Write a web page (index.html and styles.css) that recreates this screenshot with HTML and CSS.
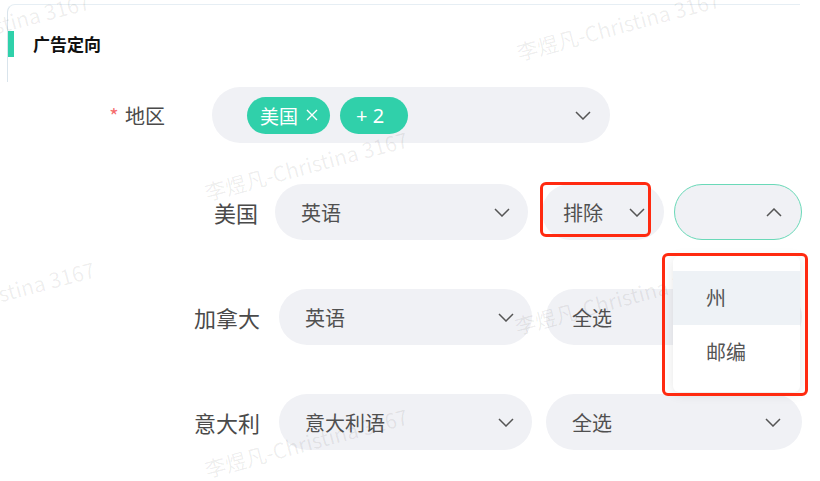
FILE: index.html
```html
<!DOCTYPE html>
<html lang="zh-CN">
<head>
<meta charset="utf-8">
<title>广告定向</title>
<link rel="stylesheet" href="styles.css">
</head>
<body>
<div class="page">
  <div class="card">
    <div class="card-head">
      <span class="bar"></span>
      <span class="title">广告定向</span>
    </div>
  </div>

  <div class="form">
    <div class="row row-main">
      <div class="label label-main"><span class="req">*</span> 地区</div>
      <div class="select select-main">
        <div class="tags">
          <span class="tag">美国<svg class="x" viewBox="0 0 14 14"><path d="M2 2L12 12M12 2L2 12"/></svg></span>
          <span class="tag tag-more">+ 2</span>
        </div>
        <svg class="chev" viewBox="0 0 16 9"><path d="M1 1L8 8L15 1"/></svg>
      </div>
    </div>

    <div class="row row-sub row-us">
      <div class="label label-us">美国</div>
      <div class="select s-lang"><span class="val">英语</span><svg class="chev" viewBox="0 0 16 9"><path d="M1 1L8 8L15 1"/></svg></div>
      <div class="select s-mode"><span class="val">排除</span><svg class="chev" viewBox="0 0 16 9"><path d="M1 1L8 8L15 1"/></svg></div>
      <div class="select s-type open"><span class="val"></span><svg class="chev" viewBox="0 0 16 9"><path d="M1 8L8 1L15 8"/></svg></div>
    </div>

    <div class="row row-sub">
      <div class="label">加拿大</div>
      <div class="select s-lang"><span class="val">英语</span><svg class="chev" viewBox="0 0 16 9"><path d="M1 1L8 8L15 1"/></svg></div>
      <div class="select s-wide"><span class="val">全选</span><svg class="chev" viewBox="0 0 16 9"><path d="M1 1L8 8L15 1"/></svg></div>
    </div>

    <div class="row row-sub">
      <div class="label">意大利</div>
      <div class="select s-lang"><span class="val">意大利语</span><svg class="chev" viewBox="0 0 16 9"><path d="M1 1L8 8L15 1"/></svg></div>
      <div class="select s-wide"><span class="val">全选</span><svg class="chev" viewBox="0 0 16 9"><path d="M1 1L8 8L15 1"/></svg></div>
    </div>
  </div>

  <div class="watermarks">
    <div class="wm wm1">李煜凡-Christina 3167</div>
    <div class="wm wm2">李煜凡-Christina 3167</div>
    <div class="wm wm3">李煜凡-Christina 3167</div>
    <div class="wm wm4">李煜凡-Christina 3167</div>
    <div class="wm wm5">李煜凡-Christina 3167</div>
    <div class="wm wm6">李煜凡-Christina 3167</div>
  </div>

  <div class="dropdown">
    <div class="opt active">州</div>
    <div class="opt">邮编</div>
  </div>

  <div class="mark mark1"></div>
  <div class="mark mark2"></div>
</div>
</body>
</html>
```
FILE: styles.css
```css
* { box-sizing: border-box; }
html, body { margin: 0; padding: 0; background: #fff; }
body {
  font-family: "Noto Sans CJK SC", "Noto Sans", sans-serif;
  color: #505050;
}
.page {
  position: relative;
  width: 820px;
  height: 481px;
  overflow: hidden;
}

.card {
  margin: 4px 0 0 7px;
  width: 793px;
  height: 78px;
  border-top: 1px solid #e6eef4;
  border-left: 1px solid #d9e4ec;
  border-top-left-radius: 8px;
  padding-top: 26px;
}
.card-head {
  display: flex;
  align-items: center;
  height: 26px;
}
.bar {
  width: 6px;
  height: 26px;
  background: #2fd1aa;
}
.title {
  margin-left: 19px;
  font-size: 17px;
  font-weight: bold;
  color: #111;
  line-height: 26px;
}

.form { display: flex; flex-direction: column; }
.row { display: flex; align-items: center; height: 56px; }
.row-main { margin-top: 5px; }
.row-us { margin-top: 41px; }
.row-sub + .row-sub { margin-top: 49px; }

.label {
  width: 260px;
  margin-right: 19px;
  text-align: right;
  font-size: 22px;
  color: #4a4a4a;
  flex: none;
}
.label-main { width: 165px; margin-right: 47px; font-size: 20px; }
.label-us { width: 258px; margin-right: 17px; }
.req { color: #f56c6c; margin-right: 2px; }

.select {
  display: flex;
  align-items: center;
  justify-content: space-between;
  height: 56px;
  border-radius: 28px;
  background: #f0f1f5;
  flex: none;
  font-size: 20px;
  color: #505050;
}
.select-main { width: 398px; padding: 0 19px 0 35px; }
.s-lang { width: 253px; padding: 0 18px 0 26px; }
.s-mode { width: 122px; margin-left: 14px; padding: 0 19px 0 21px; }
.s-type { width: 128px; margin-left: 10px; padding: 0 19px 0 21px; border: 1px solid #6ad9b8; }
.s-wide { width: 256px; margin-left: 14px; padding: 0 21px 0 26px; }

.chev {
  width: 16px;
  height: 9px;
  fill: none;
  stroke: #555;
  stroke-width: 1.5;
  flex: none;
}

.tags { display: flex; gap: 10px; }
.tag {
  display: flex;
  align-items: center;
  height: 37px;
  padding: 0 11px 0 13px;
  border-radius: 19px;
  background: #30d0aa;
  color: #fff;
  font-size: 19px;
}
.tag .x {
  width: 14px;
  height: 14px;
  margin-left: 7px;
  fill: none;
  stroke: #fff;
  stroke-width: 1.4;
}
.tag-more { padding: 0 24px 0 16px; font-family: "Noto Sans", sans-serif; font-size: 20px; }

.wm {
  position: absolute;
  font-size: 21px;
  line-height: 24px;
  white-space: nowrap;
  color: rgba(0, 0, 0, 0.07);
  transform-origin: 0 100%;
  transform: rotate(-15deg);
  pointer-events: none;
  z-index: 2;
}
.wm1 { left: -110px; top: 42px; }
.wm2 { left: 520px; top: 40px; }
.wm3 { left: 208px; top: 180px; }
.wm4 { left: -105px; top: 310px; }
.wm5 { left: 518px; top: 314px; }
.wm6 { left: 208px; top: 457px; }

.dropdown {
  position: absolute;
  left: 673px;
  top: 256px;
  width: 127px;
  height: 136px;
  padding-top: 15px;
  background: #fff;
  border-radius: 6px;
  box-shadow: 0 2px 12px rgba(0, 0, 0, 0.1);
  z-index: 3;
}
.opt {
  height: 54px;
  line-height: 54px;
  padding-left: 33px;
  font-size: 20px;
  color: #555;
}
.opt.active { background: #eef2f6; }

.mark {
  position: absolute;
  border: 3px solid #ff2a10;
  border-radius: 6px;
  z-index: 4;
}
.mark1 { left: 540px; top: 182px; width: 111px; height: 55px; }
.mark2 { left: 662px; top: 253px; width: 146px; height: 143px; }
```
